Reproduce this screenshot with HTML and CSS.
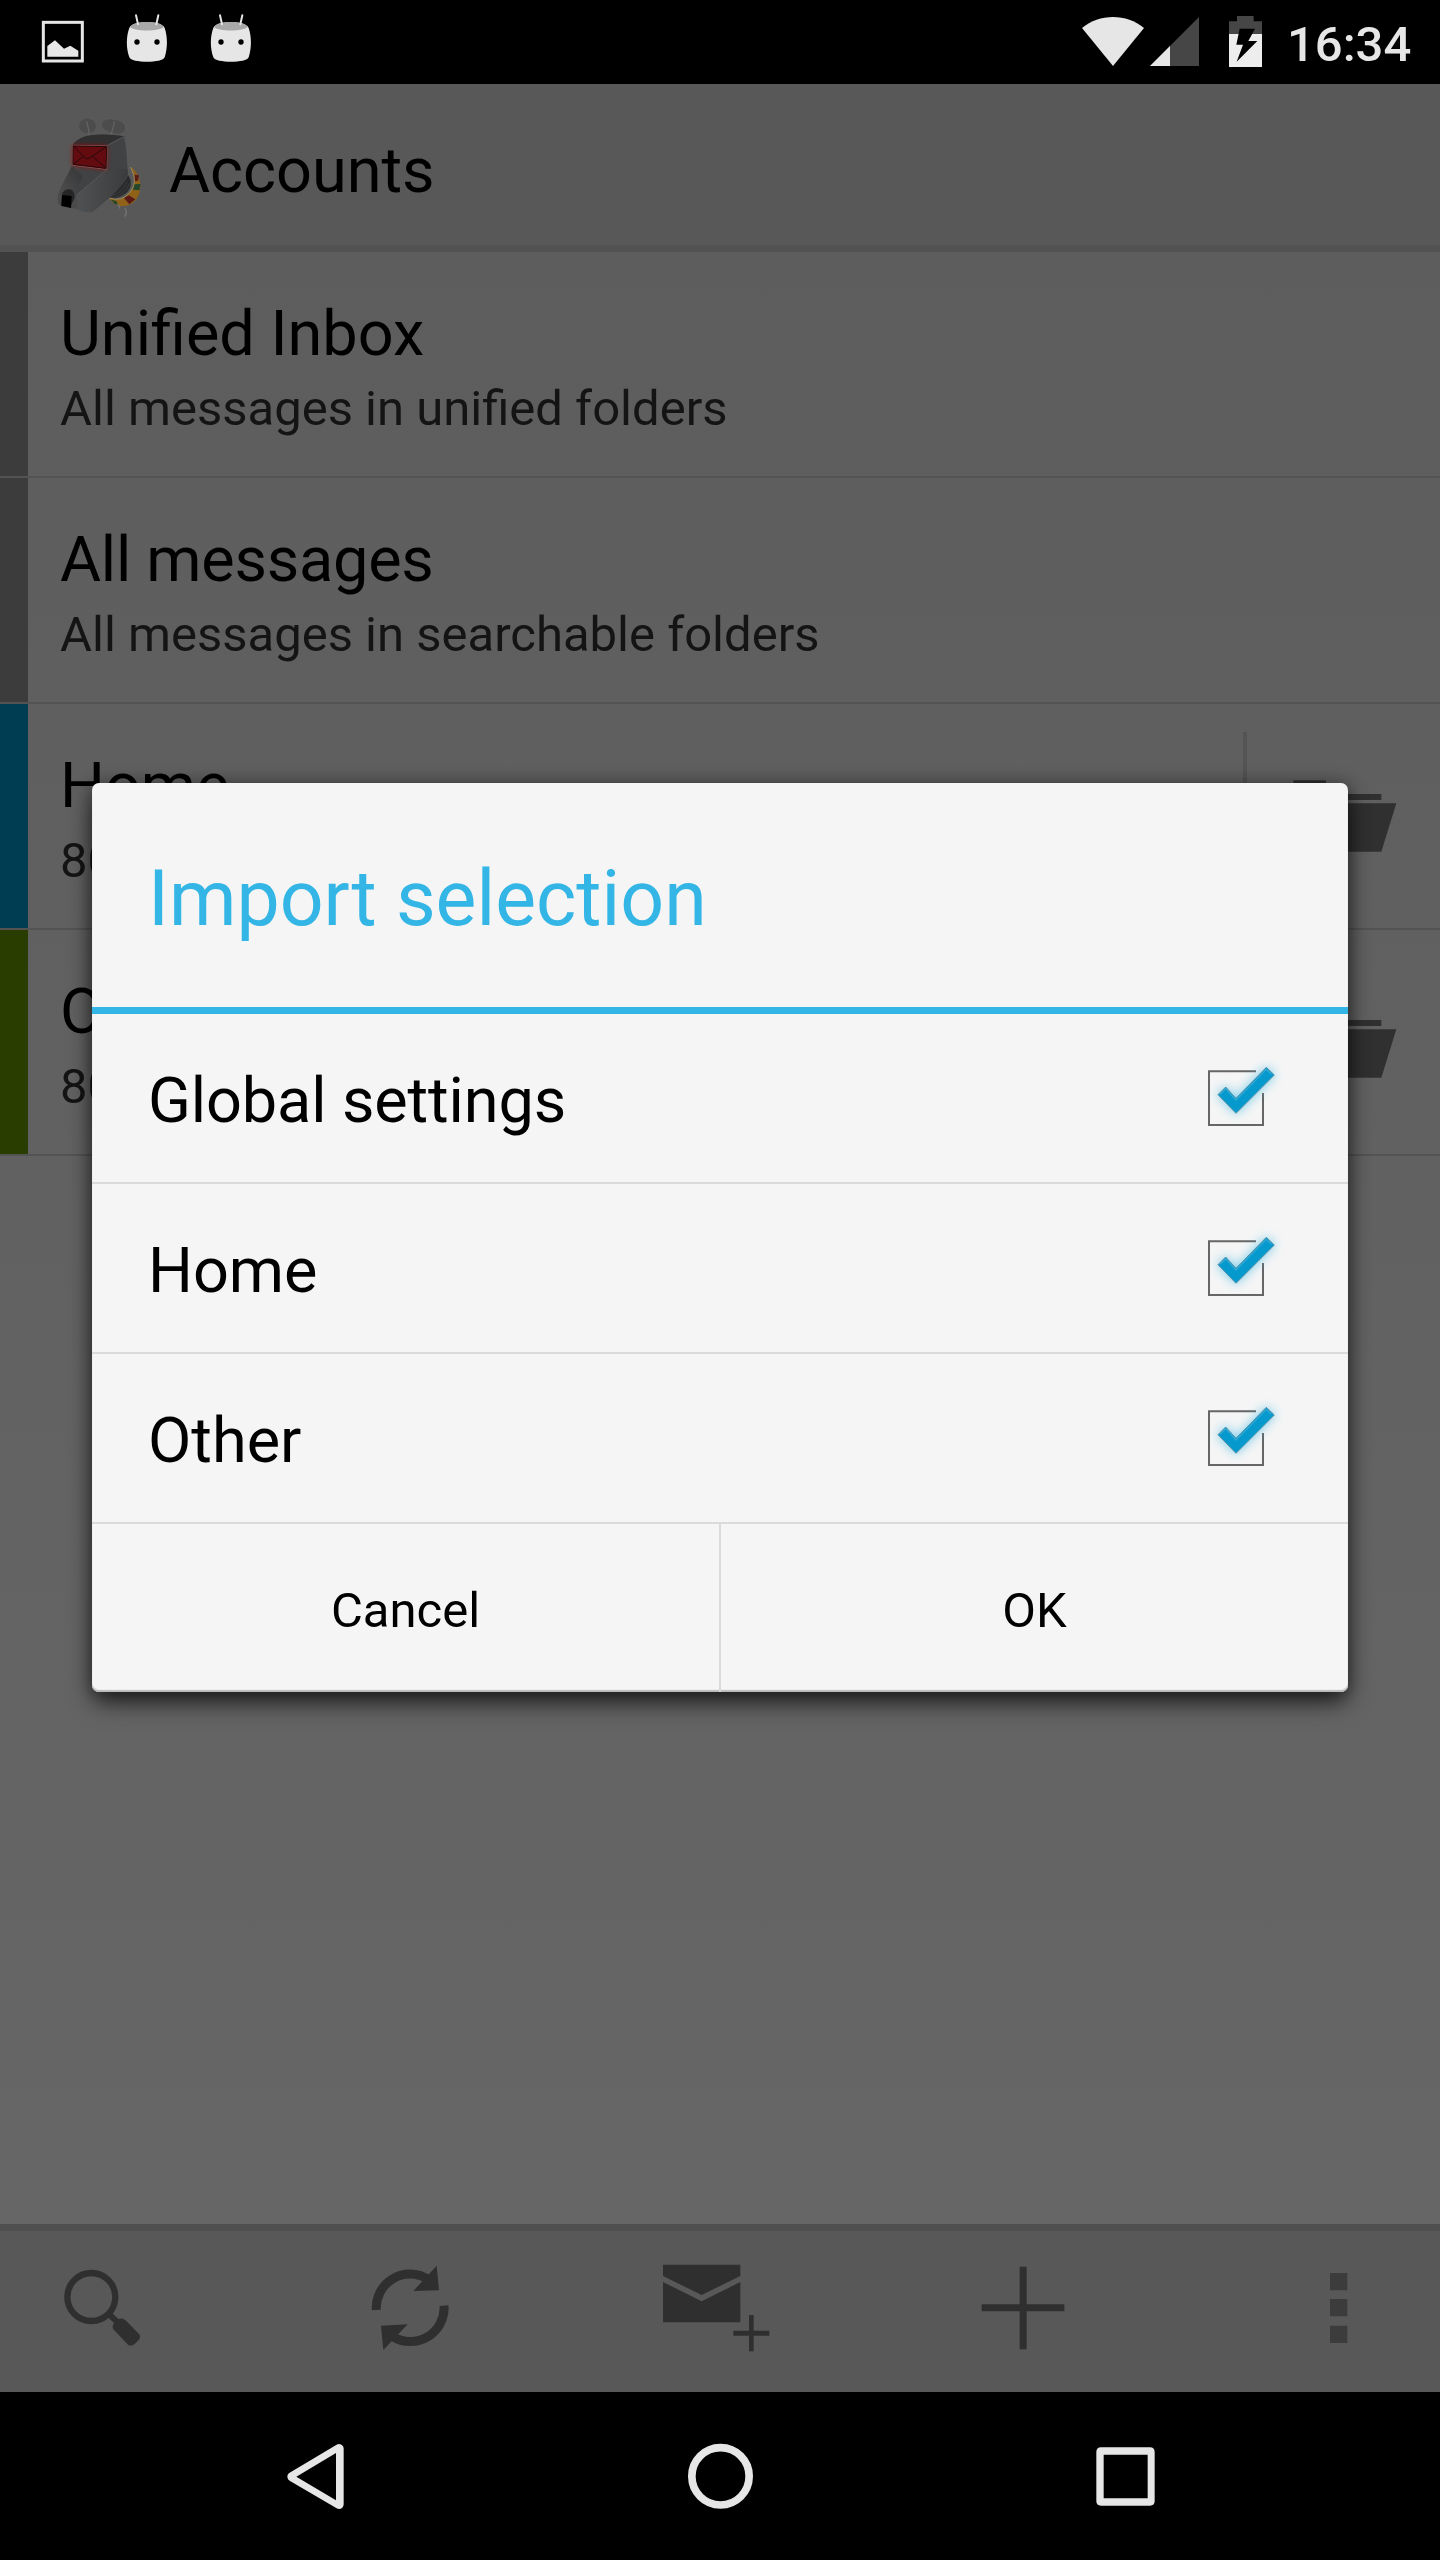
FILE: index.html
```html
<!DOCTYPE html>
<html lang="en">
<head>
<meta charset="utf-8">
<title>Accounts</title>
<link rel="stylesheet" href="styles.css">
</head>
<body>
<svg class="defs" width="0" height="0">
  <defs>
    <linearGradient id="face" x1="0" y1="0" x2="1" y2="1">
      <stop offset="0" stop-color="#3c3c3d"/><stop offset=".5" stop-color="#48494b"/><stop offset="1" stop-color="#38393b"/>
    </linearGradient>
    <linearGradient id="jaw" x1="0" y1="0" x2="1" y2="0">
      <stop offset="0" stop-color="#505153"/><stop offset="1" stop-color="#3b3c3e"/>
    </linearGradient>
    <linearGradient id="snout" x1="1" y1="0" x2="0" y2="1">
      <stop offset="0" stop-color="#343536"/><stop offset="1" stop-color="#505051"/>
    </linearGradient>
    <filter id="blur" x="-50%" y="-50%" width="200%" height="200%"><feGaussianBlur stdDeviation="8"/></filter>
    <filter id="glow" x="-50%" y="-50%" width="200%" height="200%"><feGaussianBlur stdDeviation="16"/></filter>
    <symbol id="droid" viewBox="378 36 126 156">
      <path d="M388 84c8-24 98-24 106 0 9 26 9 60 0 88-5 18-101 18-106 0-10-28-10-62 0-88z" fill="#e6e6e6"/>
      <path d="M390 80c12-19 90-19 101 0-10 15-92 15-101 0z" fill="#a8a8a8"/>
      <path d="M408 46l6 27M475 46l-6 27" stroke="#e6e6e6" stroke-width="6" stroke-linecap="round"/>
      <circle cx="411" cy="126" r="8"/><circle cx="471" cy="126" r="8"/>
    </symbol>
    <symbol id="folder" viewBox="420 228 360 360">
      <path d="M460 301h98v41h166v18H460zM448 370h321l-45 145H488z" fill="#303030"/>
    </symbol>
    <symbol id="check" viewBox="60 24 360 360">
      <path d="M288 124H147v161h162V189" fill="none" stroke="#666" stroke-width="6"/>
      <path d="M172 194l25-25 31 34 91-93 26 25-117 117z" fill="#33b5e5" opacity=".65" filter="url(#glow)"/>
      <path d="M174 194l23-23 31 34 91-93 24 23-115 115z" fill="#0599ce" stroke="#5b93a5" stroke-width="3"/>
      <path d="M180 193l17-17 31 34 91-92 15 15" fill="none" stroke="#32a9d4" stroke-width="4"/>
    </symbol>
  </defs>
</svg>

<div class="screen">
  <header class="status">
    <svg class="status-pic" viewBox="120 58 138 136"><rect x="130" y="68" width="117" height="116" fill="none" stroke="#e6e6e6" stroke-width="9"/><path d="M142 171v-32l23-17 27 25 19-9 24 15v18z" fill="#e6e6e6"/></svg>
    <svg class="droid"><use href="#droid"/></svg>
    <svg class="droid"><use href="#droid"/></svg>
    <svg class="wifi" viewBox="126 48 186 156"><path d="M126 84c52-44 134-44 186 0L219 198z" fill="#e6e6e6"/></svg>
    <svg class="signal" viewBox="330 48 147 156"><path d="M477 51v147H330z" fill="#464646"/><path d="M390 138v60h-60z" fill="#e6e6e6"/></svg>
    <svg class="battery" viewBox="567 48 99 156"><path d="M567 102V64h24V48h50v16h25v38z" fill="#464646"/><path d="M567 102h99v99h-99z" fill="#ededed"/><path d="M599 86h46l-20 37h27l-62 62 19-51h-20z" fill="#000"/></svg>
    <span class="clock">16:34</span>
  </header>

  <div class="actionbar">
    <svg class="logo" viewBox="150 336 300 336">
      <g fill="#4c4c4c" stroke="#5e5e5e" stroke-width="2"><path d="M264 354c34 6 30 42 6 47-44 4-44-46-6-47zM327 356c34 2 58 14 47 38-10 12-34 10-46 2-32-10-28-36-1-40z"/></g>
      <path d="M259 364q7 16 9 48M344 364q-6 20-13 52" fill="none" stroke="#626262" stroke-width="4"/>
      <path d="M384 525c22 30 0 66-50 72l-8-10 40-50z" fill="#2a2b2c"/>
      <path d="M381 545q-8 30-52 46M388 550q-10 34-56 46" fill="none" stroke="#454648" stroke-width="2"/>
      <path d="M391 501c44 26 42 110-20 118q-28 2-43-25 36 12 58-13c22-22 22-50 5-80z" fill="#8f6218"/>
      <path d="M403 524l14 2-3 16-11 2z" fill="#5c1c16"/>
      <path d="M402 553l20-1-4 19-19-2z" fill="#24472b"/>
      <path d="M386 586l20 12-18 15-16-19z" fill="#5a1a16"/>
      <path d="M333 599l16 4 6 12-12-4z" fill="#24472b"/>
      <path d="M391 501c17 30 17 58-5 80q-22 25-58 13" fill="none" stroke="#9c8c5c" stroke-width="3"/>
      <path d="M353 612q6 8 8 16" stroke="#707070" stroke-width="4" fill="none"/>
      <ellipse cx="369" cy="635" rx="11" ry="17" fill="#585858"/><path d="M375 624q8 14-1 26" stroke="#747474" stroke-width="4" fill="none"/>
      <path d="M218 434q20-26 60-29 46-4 96 4 12 60 10 118-10 24-54 64l-52 44q-20 4-52-10l-50-12q-6-18 2-40l42-86z" fill="url(#face)"/>
      <path d="M218 434q20-26 60-29 46-4 96 4l-52 26z" fill="#303031"/>
      <path d="M322 435l50-26q8 20 8 50l-20 70-90 32-40 26-34-14 44-72z" fill="#414244"/>
      <path d="M230 586l92-76 62-4q-2 36-50 82l-58 48q-18 4-48-8z" fill="url(#jaw)"/>
      <path d="M216 500l32 28q-8 32-32 60-12-24-40-8z" fill="url(#snout)"/>
      <path d="M228 586l94-78M322 436l50-26q10 24 12 100" stroke="#606163" stroke-width="2" fill="none"/>
      <path d="M176 580q-6 22 0 34l56 14q2-26-8-42z" fill="#4b4b4b"/>
      <path d="M186 584q6-18 24-16 14 4 14 26l-14 28-26-6z" fill="#262626"/><path d="M186 585l29 3-2 36-29-6z" fill="#000"/>
      <path d="M219 436l101 3-1 68-101-12z" fill="#b50010" opacity=".8" filter="url(#blur)"/>
      <path d="M219 436l102 2-1 70-102-12z" fill="#640b10" stroke="#87504f" stroke-width="3"/>
      <path d="M220 438l100 2-2 65-99-12zM220 438l38 38h8l54-36M220 492l32-24M318 504l-42-36" fill="none" stroke="#25090b" stroke-width="3"/>
    </svg>
    <h1>Accounts</h1>
  </div>

  <main class="accounts">
    <div class="row"><i class="chip"></i><div class="label"><b>Unified Inbox</b><span>All messages in unified folders</span></div></div>
    <div class="row"><i class="chip"></i><div class="label"><b class="tight">All messages</b><span>All messages in searchable folders</span></div></div>
    <div class="row"><i class="chip blue"></i><div class="label"><b>Home</b><span>80</span></div><i class="rule"></i><svg class="folder"><use href="#folder"/></svg></div>
    <div class="row"><i class="chip green"></i><div class="label"><b>Other</b><span>80</span></div><i class="rule"></i><svg class="folder"><use href="#folder"/></svg></div>
  </main>

  <div class="toolbar">
    <svg viewBox="138 165 336 336"><circle cx="274" cy="291" r="72" fill="none" stroke="#2f2f2f" stroke-width="19"/><path d="M326 342l28 26" stroke="#2f2f2f" stroke-width="18"/><path d="M340 372l14-14q12-6 22 2l41 42q6 8 0 17l-13 13q-10 8-20 2l-44-46q-4-8 0-16z" fill="#2f2f2f"/></svg>
    <svg viewBox="1059 165 336 336"><path d="M1129 330a101 101 0 0 1 155-92M1332 317a101 101 0 0 1-155 92" fill="none" stroke="#2f2f2f" stroke-width="27"/><path d="M1310 197l7 74-77 2zM1150 450l-7-73 80-4z" fill="#2f2f2f"/></svg>
    <svg viewBox="180 165 336 336"><path d="M189 194h232v34l-116 57-116-57zM189 246l116 58 116-58v121H189zM447 345h14v47h47v15h-47v47h-14v-47h-47v-15h47z" fill="#2f2f2f"/></svg>
    <svg viewBox="1101 165 336 336"><path d="M1259 200h21v113h113v21h-113v114h-21V334h-114v-21h114z" fill="#2f2f2f"/></svg>
    <svg class="more" viewBox="840 165 120 336"><path d="M870 219h52v52h-52zM870 297h52v52h-52zM870 377h52v52h-52z" fill="#3c3c3c"/></svg>
  </div>

  <nav class="navbar">
    <svg viewBox="777 660 336 336"><path d="M1017 746v167L876 830z" fill="none" stroke="#e6e6e6" stroke-width="28" stroke-linejoin="round"/><path d="M1008 759v142L889 830z"/></svg>
    <svg viewBox="192 660 336 336"><circle cx="361.500" cy="829" r="86" fill="none" stroke="#e6e6e6" stroke-width="23"/></svg>
    <svg viewBox="87 660 336 336"><path fill-rule="evenodd" d="M183 742h147q14 0 14 14v147q0 14-14 14H183q-14 0-14-14V756q0-14 14-14zM191 764v131h132V764z" fill="#e6e6e6"/></svg>
  </nav>

  <section class="dialog">
    <h2>Import selection</h2>
    <div class="option"><span class="tight">Global settings</span><svg><use href="#check"/></svg></div>
    <div class="option"><span>Home</span><svg><use href="#check"/></svg></div>
    <div class="option"><span>Other</span><svg><use href="#check"/></svg></div>
    <div class="buttons"><button>Cancel</button><button>OK</button></div>
  </section>
</div>
</body>
</html>
```

FILE: styles.css
```css
* { box-sizing: border-box; }
body { margin: 0; font-family: Roboto, sans-serif; background: #000; }
svg { display: block; flex: none; }
.defs { position: absolute; }
h1, h2, b { margin: 0; font-weight: 400; }

.screen {
  position: relative;
  width: 1440px;
  height: 2560px;
  display: flex;
  flex-direction: column;
  overflow: hidden;
}

.status {
  height: 84px;
  flex: none;
  display: flex;
  align-items: flex-start;
  padding: 0 29px 0 40px;
  background: #000;
}
.status-pic { width: 46px; height: 45.33px; margin: 19.33px 40px 0 0; }
.droid { width: 42px; height: 52px; margin: 12px 42px 0 0; }
.wifi { width: 62px; height: 52px; margin: 16px 6px 0 auto; }
.signal { width: 49px; height: 52px; margin: 16px 30px 0 0; }
.battery { width: 33px; height: 52px; margin: 16px 25px 0 0; }
.clock {
  width: 124px;
  font-size: 49px;
  font-weight: 500;
  line-height: 89px;
  color: #e6e6e6;
  white-space: nowrap;
}

.actionbar {
  height: 168px;
  flex: none;
  display: flex;
  align-items: center;
  padding-left: 50px;
  background: #585858;
  border-bottom: 7px solid #525252;
}
.logo { width: 100px; height: 112px; margin-top: 7px; }
.actionbar h1 { margin: 12px 0 0 19px; font-size: 63px; line-height: 74px; color: #000; }

.accounts { flex: 1; background: linear-gradient(#5d5d5d, #666); }
.row { height: 226px; display: flex; align-items: center; border-bottom: 2px solid #535353; }
.chip { width: 28px; height: 224px; background: #3c3c3c; }
.chip.blue { background: #003d52; }
.chip.green { background: #293d00; }
.label { flex: 1; display: flex; flex-direction: column; padding: 10px 0 0 32px; }
.label b { font-size: 63px; line-height: 80px; color: #000; }
.label span { font-size: 49px; line-height: 70px; color: #141414; }
.label .tight { letter-spacing: -0.25px; }
.rule { width: 4px; height: 168px; background: #545454; }
.folder { width: 120px; height: 120px; margin: 0 40px 0 33px; }

.toolbar {
  height: 168px;
  flex: none;
  display: flex;
  align-items: flex-start;
  gap: 195px;
  padding: 24px 80px 0 46px;
  background: #585858;
  border-top: 7px solid #4f4f4f;
}
.toolbar svg { width: 112px; height: 112px; }
.toolbar .more { width: 40px; margin-left: auto; }

.navbar {
  height: 168px;
  flex: none;
  display: flex;
  align-items: center;
  gap: 293px;
  padding-left: 259px;
  background: #000;
}
.navbar svg { width: 112px; height: 112px; }

.dialog {
  position: absolute;
  left: 92px;
  top: 783px;
  width: 1256px;
  height: 909px;
  display: flex;
  flex-direction: column;
  background: #f5f5f5;
  border-radius: 7px;
  box-shadow: 0 14px 24px -4px rgba(0, 0, 0, .6), 0 2px 18px 2px rgba(0, 0, 0, .4), inset 0 -2px 1px #bbb;
}
.dialog h2 {
  height: 231px;
  padding: 4px 56px 0;
  border-bottom: 7px solid #33b5e5;
  font-size: 77px;
  line-height: 224px;
  color: #33b5e5;
}
.option {
  height: 170px;
  display: flex;
  align-items: center;
  justify-content: space-between;
  padding: 0 48px 0 56px;
  border-bottom: 2px solid #dadada;
}
.option span { font-size: 63px; line-height: 74px; padding-top: 6px; color: #000; }
.option .tight { letter-spacing: -0.12px; }
.option svg { width: 120px; height: 120px; }
.buttons { flex: 1; display: flex; }
.buttons button {
  flex: 1;
  padding: 6px 0 0;
  border: 0;
  background: none;
  font: 400 49px/60px Roboto, sans-serif;
  color: #000;
}
.buttons button:first-child { border-right: 2px solid #dadada; }
```
